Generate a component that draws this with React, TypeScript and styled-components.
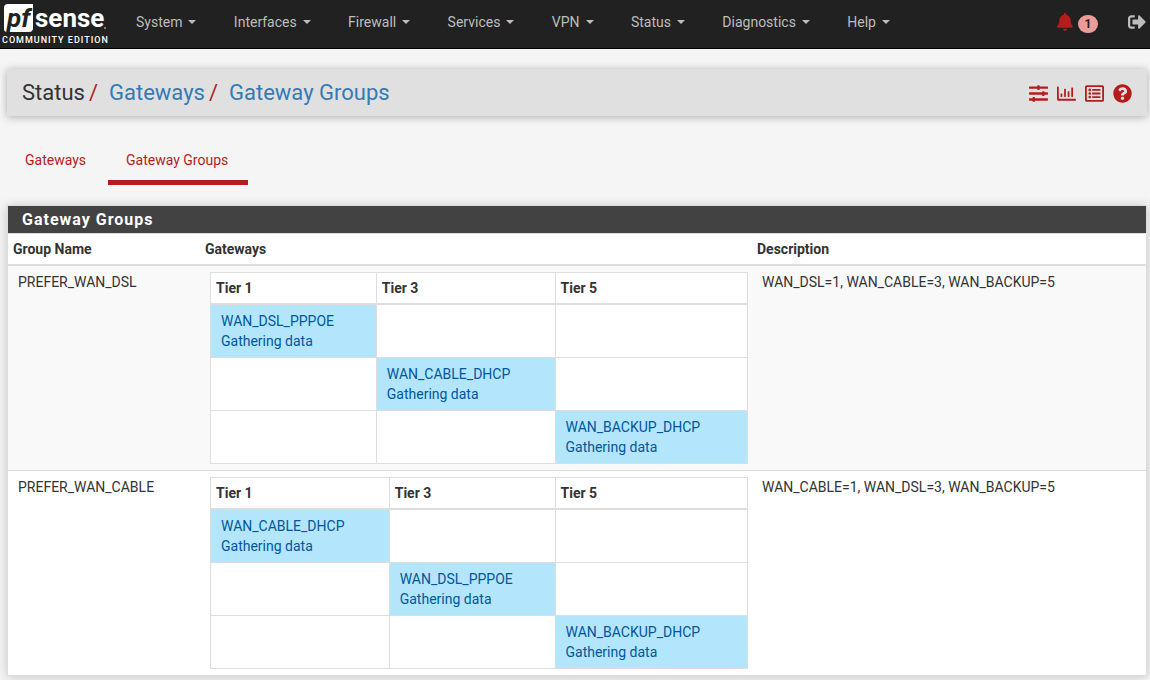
import React from "react";
import styled, { createGlobalStyle } from "styled-components";
import {
  FaBell,
  FaQuestionCircle,
  FaRegChartBar,
  FaRegListAlt,
  FaSignOutAlt,
  FaSlidersH,
} from "react-icons/fa";

const GlobalStyle = createGlobalStyle`
  *, *::before, *::after { box-sizing: border-box; }
  body {
    margin: 0;
    background: #f5f5f5;
    color: #333;
    font-family: Roboto, "Liberation Sans", sans-serif;
    font-size: 14px;
    line-height: 20px;
  }
  a { text-decoration: none; }
`;

const Navbar = styled.header`
  display: flex;
  align-items: center;
  height: 49px;
  padding: 0 4px 4px 0;
  background: #212121;
  border-bottom: 1px solid #000;
`;

const Brand = styled.a`
  display: block;
  align-self: flex-start;
  width: 118px;
  height: 44px;
  flex: none;
`;

const Menu = styled.nav`
  display: flex;
  justify-content: space-between;
  flex: 0 1 790px;
`;

const MenuButton = styled.button`
  display: flex;
  align-items: center;
  gap: 6px;
  padding: 0 18px;
  margin: 0;
  border: 0;
  background: none;
  color: #bdbdbd;
  font: inherit;
  white-space: nowrap;

  &::after {
    content: "";
    border-top: 4px solid currentColor;
    border-left: 4px solid transparent;
    border-right: 4px solid transparent;
  }
`;

const NavActions = styled.div`
  display: flex;
  align-items: center;
  gap: 30px;
  margin-left: auto;
`;

const NavLink = styled.a<{ $alert?: boolean }>`
  display: flex;
  align-items: center;
  gap: 4px;
  color: ${(p) => (p.$alert ? "#b71c1c" : "#bdbdbd")};
`;

const Badge = styled.span`
  min-width: 20px;
  padding: 3px 6px;
  margin-top: 4px;
  border-radius: 10px;
  background: #ef9a9a;
  color: #212121;
  font-size: 12px;
  font-weight: 700;
  line-height: 12px;
  text-align: center;
`;

const Page = styled.main`
  padding: 20px 3px 4px 7px;
`;

const TitleBar = styled.header`
  display: flex;
  align-items: center;
  justify-content: space-between;
  height: 47px;
  padding: 0 15px;
  background: #e0e0e0;
  box-shadow: 0 1px 8px rgba(0, 0, 0, 0.3);
`;

const Crumbs = styled.ol`
  display: flex;
  margin: 0;
  padding: 0;
  list-style: none;
  font-size: 22px;
  line-height: 24px;
`;

const Crumb = styled.li`
  & + &::before {
    content: "/";
    padding: 0 11px 0 4px;
    color: #b71c1c;
  }
  a { color: #337ab7; }
`;

const Shortcuts = styled.div`
  display: flex;
  gap: 9px;
  padding-top: 2px;
`;

const Shortcut = styled.a`
  display: flex;
  color: #b71c1c;
`;

const Tabs = styled.nav`
  display: flex;
  gap: 2px;
  margin: 24px 0 20px;
`;

const Tab = styled.a<{ $active?: boolean }>`
  padding: 10px 20px 10px 18px;
  border-bottom: 5px solid ${(p) => (p.$active ? "#b71c1c" : "transparent")};
  color: #b71c1c;
`;

const Panel = styled.section`
  border: 1px solid #ddd;
  background: #fff;
  box-shadow: 0 1px 10px rgba(0, 0, 0, 0.2);
`;

const PanelTitle = styled.h2`
  margin: 0;
  padding: 4px 14px 3px;
  background: #424242;
  color: #fff;
  font-size: 16px;
  font-weight: 700;
  line-height: 20px;
  letter-spacing: 1px;
`;

const GroupTable = styled.table`
  width: 100%;
  table-layout: fixed;
  border-collapse: collapse;
`;

const HeadCell = styled.th<{ $width: number }>`
  width: ${(p) => p.$width}px;
  padding: 5px;
  border-top: 1px solid #ddd;
  border-bottom: 2px solid #ddd;
  text-align: left;
  vertical-align: bottom;
`;

const GroupRow = styled.tr`
  border-bottom: 1px solid #ddd;
  &:nth-child(odd) { background: #f9f9f9; }
  &:last-child { border-bottom: 0; }
`;

const GroupCell = styled.td`
  padding: 6px 4px 6px 10px;
  vertical-align: top;
`;

const TierTable = styled.table`
  width: 100%;
  border-collapse: collapse;
  background: #fff;
`;

const TierHead = styled.th`
  padding: 5px;
  border: 1px solid #ddd;
  border-bottom-width: 2px;
  text-align: left;
`;

const TierCell = styled.td<{ $filled: boolean }>`
  height: 53px;
  padding: 6px 10px;
  border: 1px solid #ddd;
  background: ${(p) => (p.$filled ? "#b3e5fc" : "transparent")};
  color: #01579b;
`;

const menus = [
  "System",
  "Interfaces",
  "Firewall",
  "Services",
  "VPN",
  "Status",
  "Diagnostics",
  "Help",
];

const tiers = ["Tier 1", "Tier 3", "Tier 5"];

const groups = [
  {
    name: "PREFER_WAN_DSL",
    gateways: ["WAN_DSL_PPPOE", "WAN_CABLE_DHCP", "WAN_BACKUP_DHCP"],
    description: "WAN_DSL=1, WAN_CABLE=3, WAN_BACKUP=5",
  },
  {
    name: "PREFER_WAN_CABLE",
    gateways: ["WAN_CABLE_DHCP", "WAN_DSL_PPPOE", "WAN_BACKUP_DHCP"],
    description: "WAN_CABLE=1, WAN_DSL=3, WAN_BACKUP=5",
  },
];

function Logo() {
  return (
    <svg width="118" height="48" viewBox="0 0 118 48" fontFamily="Roboto, sans-serif">
      <path d="M8 4H33V28Q33 32 29 32H7Q4 32 4 29V8Q4 4 8 4Z" fill="#fff" />
      <text x="7" y="27" fontSize="26" fontWeight="700" fontStyle="italic" fill="#212121">
        pf
      </text>
      <text x="35" y="27" fontSize="26" fontWeight="700" fill="#fff">
        sense
      </text>
      <circle cx="105" cy="28" r="1" fill="#9e9e9e" />
      <text x="2" y="43" fontSize="9" fontWeight="500" letterSpacing="1" fill="#fff">
        COMMUNITY EDITION
      </text>
    </svg>
  );
}

function Tiers({ gateways }: { gateways: string[] }) {
  return (
    <TierTable>
      <thead>
        <tr>
          {tiers.map((tier) => (
            <TierHead key={tier} scope="col">{tier}</TierHead>
          ))}
        </tr>
      </thead>
      <tbody>
        {gateways.map((gateway, row) => (
          <tr key={gateway}>
            {tiers.map((tier, col) => (
              <TierCell key={tier} $filled={row === col}>
                {row === col && (
                  <>
                    {gateway}
                    <br />
                    Gathering data
                  </>
                )}
              </TierCell>
            ))}
          </tr>
        ))}
      </tbody>
    </TierTable>
  );
}

export default function App() {
  return (
    <>
      <GlobalStyle />
      <Navbar>
        <Brand href="#" aria-label="pfSense home">
          <Logo />
        </Brand>
        <Menu aria-label="Main">
          {menus.map((label) => (
            <MenuButton key={label} type="button">{label}</MenuButton>
          ))}
        </Menu>
        <NavActions>
          <NavLink href="#notices" $alert aria-label="Notices">
            <FaBell size={18} />
            <Badge>1</Badge>
          </NavLink>
          <NavLink href="#logout" aria-label="Log out">
            <FaSignOutAlt size={18} />
          </NavLink>
        </NavActions>
      </Navbar>
      <Page>
        <TitleBar>
          <Crumbs>
            <Crumb>Status</Crumb>
            <Crumb><a href="#gateways">Gateways</a></Crumb>
            <Crumb><a href="#groups">Gateway Groups</a></Crumb>
          </Crumbs>
          <Shortcuts>
            <Shortcut href="#settings" aria-label="Related settings"><FaSlidersH size={19} /></Shortcut>
            <Shortcut href="#graphs" aria-label="Monitoring"><FaRegChartBar size={19} /></Shortcut>
            <Shortcut href="#logs" aria-label="Related log entries"><FaRegListAlt size={19} /></Shortcut>
            <Shortcut href="#help" aria-label="Help"><FaQuestionCircle size={19} /></Shortcut>
          </Shortcuts>
        </TitleBar>
        <Tabs aria-label="Gateway status">
          <Tab href="#gateways">Gateways</Tab>
          <Tab href="#groups" $active aria-current="page">Gateway Groups</Tab>
        </Tabs>
        <Panel>
          <PanelTitle>Gateway Groups</PanelTitle>
          <GroupTable>
            <thead>
              <tr>
                <HeadCell scope="col" $width={192}>Group Name</HeadCell>
                <HeadCell scope="col" $width={552}>Gateways</HeadCell>
                <HeadCell scope="col" $width={394}>Description</HeadCell>
              </tr>
            </thead>
            <tbody>
              {groups.map((group) => (
                <GroupRow key={group.name}>
                  <GroupCell>{group.name}</GroupCell>
                  <GroupCell><Tiers gateways={group.gateways} /></GroupCell>
                  <GroupCell>{group.description}</GroupCell>
                </GroupRow>
              ))}
            </tbody>
          </GroupTable>
        </Panel>
      </Page>
    </>
  );
}
